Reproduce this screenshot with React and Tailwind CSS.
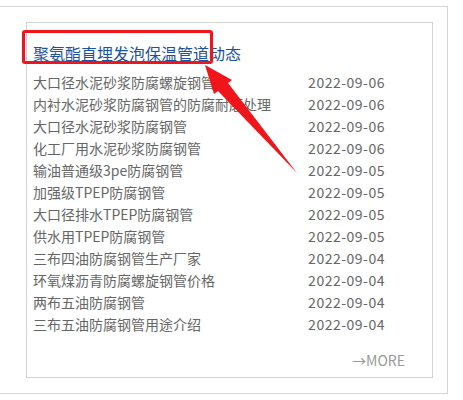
import React from "react";

const news = [
  ["大口径水泥砂浆防腐螺旋钢管", "2022-09-06"],
  ["内衬水泥砂浆防腐钢管的防腐耐磨处理", "2022-09-06"],
  ["大口径水泥砂浆防腐钢管", "2022-09-06"],
  ["化工厂用水泥砂浆防腐钢管", "2022-09-06"],
  ["输油普通级3pe防腐钢管", "2022-09-05"],
  ["加强级TPEP防腐钢管", "2022-09-05"],
  ["大口径排水TPEP防腐钢管", "2022-09-05"],
  ["供水用TPEP防腐钢管", "2022-09-05"],
  ["三布四油防腐钢管生产厂家", "2022-09-04"],
  ["环氧煤沥青防腐螺旋钢管价格", "2022-09-04"],
  ["两布五油防腐钢管", "2022-09-04"],
  ["三布五油防腐钢管用途介绍", "2022-09-04"],
];

export default function App() {
  return (
    <div
      className="relative w-[463px] h-[400px] bg-white overflow-hidden"
      style={{ fontFamily: '"Microsoft YaHei", "Noto Sans CJK SC", "Noto Sans", sans-serif' }}
    >
      <div className="mt-[6px] w-[448px] h-[388px] border-t border-r border-b border-[#d6d6d6] pt-[15px] pl-[26px]">
        <div className="w-[407px] h-[356px] border border-[#d3d3d3] pl-[6px] pr-[47px] pt-[17px]">
          <h2 className="text-[16px] font-normal leading-[26px] text-[#1a52a0]">聚氨酯直埋发泡保温管道动态</h2>
          <ul className="mt-[5px] text-[14px] leading-[22px] text-[#666]">
            {news.map(([title, date]) => (
              <li key={title} className="flex justify-between">
                <span>{title}</span>
                <span className="tracking-[0.5px]">{date}</span>
              </li>
            ))}
          </ul>
          <div className="mt-[15px] flex justify-end">
            <a className="mr-[-20px] text-[14px] leading-[20px] text-[#999]">→MORE</a>
          </div>
        </div>
      </div>

      {/* annotation */}
      <div className="absolute left-[22px] top-[30px] w-[191px] h-[34px] border-[3px] border-[#f0151a] rounded-[3px]" />
      <svg className="absolute inset-0 pointer-events-none" width="463" height="400" viewBox="0 0 463 400">
        <polygon
          points="205,65 232,80 228,83 297,173 218,91 214,94"
          fill="#f0151a"
        />
      </svg>
    </div>
  );
}
